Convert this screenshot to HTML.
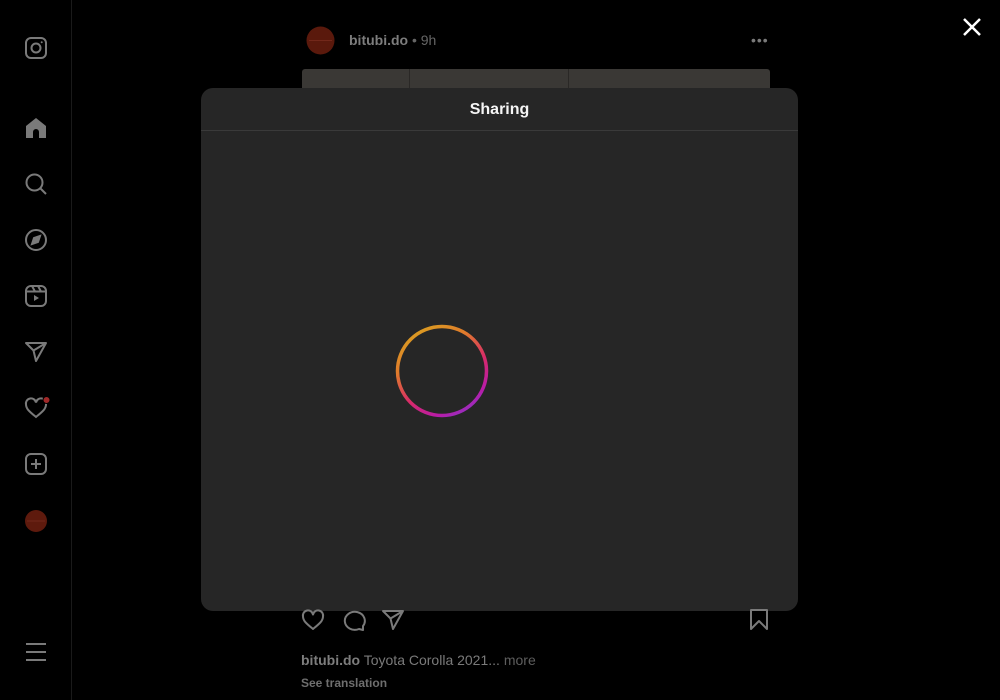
<!DOCTYPE html>
<html><head><style>
body{margin:0;width:1000px;height:700px;background:#000;overflow:hidden;font-family:"Liberation Sans",sans-serif;position:relative}
.side{position:absolute;left:0;top:0;width:71px;height:700px;border-right:1px solid #1a1a1a}
.side svg{position:absolute;left:24px}
.t{position:absolute;color:#8a8a8a;font-size:14px}
.modal{position:absolute;left:201px;top:88px;width:597px;height:523px;background:#262626;border-radius:12px}
.hd{height:42px;border-bottom:1px solid #3a3a3a;color:#f5f5f5;font-weight:bold;font-size:16px;text-align:center;line-height:43px}
</style></head><body>
<div class="side">
<svg style="top:36px" width="24" height="24" viewBox="0 0 24 24" fill="none" stroke="#7a7a7a" stroke-width="2"><rect x="2" y="2" width="20" height="20" rx="5"/><circle cx="12" cy="12" r="4.5"/><circle cx="17.7" cy="6.3" r="1" fill="#7a7a7a" stroke="none"/></svg>
<svg style="top:116px" width="24" height="24" viewBox="0 0 24 24"><path d="M12 2 L22 10 V22 H15 V16 a3 3 0 0 0-6 0 V22 H2 V10Z" fill="#7a7a7a"/></svg>
<svg style="top:172px" width="24" height="24" viewBox="0 0 24 24" fill="none" stroke="#7a7a7a" stroke-width="2"><circle cx="10.5" cy="10.5" r="8"/><path d="M16.5 16.5 L22 22"/></svg>
<svg style="top:228px" width="24" height="24" viewBox="0 0 24 24" fill="none" stroke="#7a7a7a" stroke-width="2"><circle cx="12" cy="12" r="10"/><path d="M16 8 L14 14 L8 16 L10 10Z" fill="#7a7a7a"/></svg>
<svg style="top:284px" width="24" height="24" viewBox="0 0 24 24" fill="none" stroke="#7a7a7a" stroke-width="2"><rect x="2" y="2" width="20" height="20" rx="5"/><path d="M2 7.5H22M8 2l3 5.5M14 2l3 5.5"/><path d="M10 11v6l5-3z" fill="#7a7a7a" stroke="none"/></svg>
<svg style="top:340px" width="24" height="24" viewBox="0 0 24 24" fill="none" stroke="#7a7a7a" stroke-width="2" stroke-linejoin="round"><path d="M22 3 L2 3 L9.5 10.5 L12 21 Z M9.5 10.5 L22 3"/></svg>
<svg style="top:396px" width="26" height="24" viewBox="0 0 26 24" fill="none" stroke="#7a7a7a" stroke-width="2"><path d="M12 21 C6 16 2 13 2 8.5 A5 5 0 0 1 12 6.5 A5 5 0 0 1 22 8.5 C22 13 18 16 12 21Z"/><circle cx="22.5" cy="4" r="3.5" fill="#a02828" stroke="#000" stroke-width="1"/></svg>
<svg style="top:452px" width="24" height="24" viewBox="0 0 24 24" fill="none" stroke="#7a7a7a" stroke-width="2"><rect x="2" y="2" width="20" height="20" rx="5"/><path d="M12 7v10M7 12h10"/></svg>
<svg style="top:509px" width="24" height="24" viewBox="0 0 24 24"><circle cx="12" cy="12" r="11" fill="#5e1a0d"/><path d="M3 12H21" stroke="#73281a" stroke-width="1"/></svg>
<svg style="top:640px" width="24" height="24" viewBox="0 0 24 24" fill="none" stroke="#7a7a7a" stroke-width="2"><path d="M2 4H22M2 12H22M2 20H22"/></svg>
</div>
<svg style="position:absolute;left:306px;top:26px" width="29" height="29"><circle cx="14.5" cy="14.5" r="14" fill="#5a190c"/><path d="M3 14.5H26" stroke="#73281a"/></svg>
<div class="t" style="left:349px;top:32px;font-weight:bold;color:#7d7d7d">bitubi.do <span style="font-weight:normal;color:#666">• 9h</span></div>
<div style="position:absolute;left:751px;top:38px;color:#7a7a7a;font-size:14px;letter-spacing:1px;line-height:4px">•••</div>
<div style="position:absolute;left:302px;top:69px;width:468px;height:30px;background:#3a3835;border-radius:3px"><div style="position:absolute;left:107px;top:0;width:1px;height:30px;background:#2a2826"></div><div style="position:absolute;left:266px;top:0;width:1px;height:30px;background:#2a2826"></div></div>
<div class="modal"><div class="hd">Sharing</div>
<svg style="position:absolute;left:194px;top:236px" width="94" height="94" viewBox="0 0 94 94"><defs><linearGradient id="g" x1="0.2" y1="0" x2="0.8" y2="1"><stop offset="0" stop-color="#d9a020"/><stop offset="0.3" stop-color="#e07a2c"/><stop offset="0.6" stop-color="#d82a6a"/><stop offset="0.85" stop-color="#b81ca8"/><stop offset="1" stop-color="#8a36c8"/></linearGradient></defs><circle cx="47" cy="47" r="44.5" fill="none" stroke="url(#g)" stroke-width="3.5"/></svg>
</div>
<svg style="position:absolute;left:962px;top:17px" width="20" height="20" viewBox="0 0 20 20" stroke="#fff" stroke-width="2.5"><path d="M2 2L18 18M18 2L2 18"/></svg>
<svg style="position:absolute;left:301px;top:608px" width="110" height="24" viewBox="0 0 110 24" fill="none" stroke="#7a7a7a" stroke-width="2" stroke-linejoin="round"><path d="M12 21C6 16 2 13 2 8.5A5 5 0 0 1 12 6.5A5 5 0 0 1 22 8.5C22 13 18 16 12 21Z"/><path d="M62 18A10 9 0 1 0 58 21L62 22Z"/><path d="M102 3L82 3L89.5 10.5L92 21Z M89.5 10.5L102 3"/></svg>
<svg style="position:absolute;left:749px;top:608px" width="20" height="24" viewBox="0 0 20 24" fill="none" stroke="#7a7a7a" stroke-width="2" stroke-linejoin="round"><path d="M2 2H18V21L10 13L2 21Z"/></svg>
<div class="t" style="left:301px;top:652px"><b style="color:#7d7d7d">bitubi.do</b> <span style="color:#7a7a7a">Toyota Corolla 2021...</span> <span style="color:#5e5e5e">more</span></div>
<div class="t" style="left:301px;top:676px;font-size:12px;font-weight:bold;color:#6e6e6e">See translation</div>
</body></html>
